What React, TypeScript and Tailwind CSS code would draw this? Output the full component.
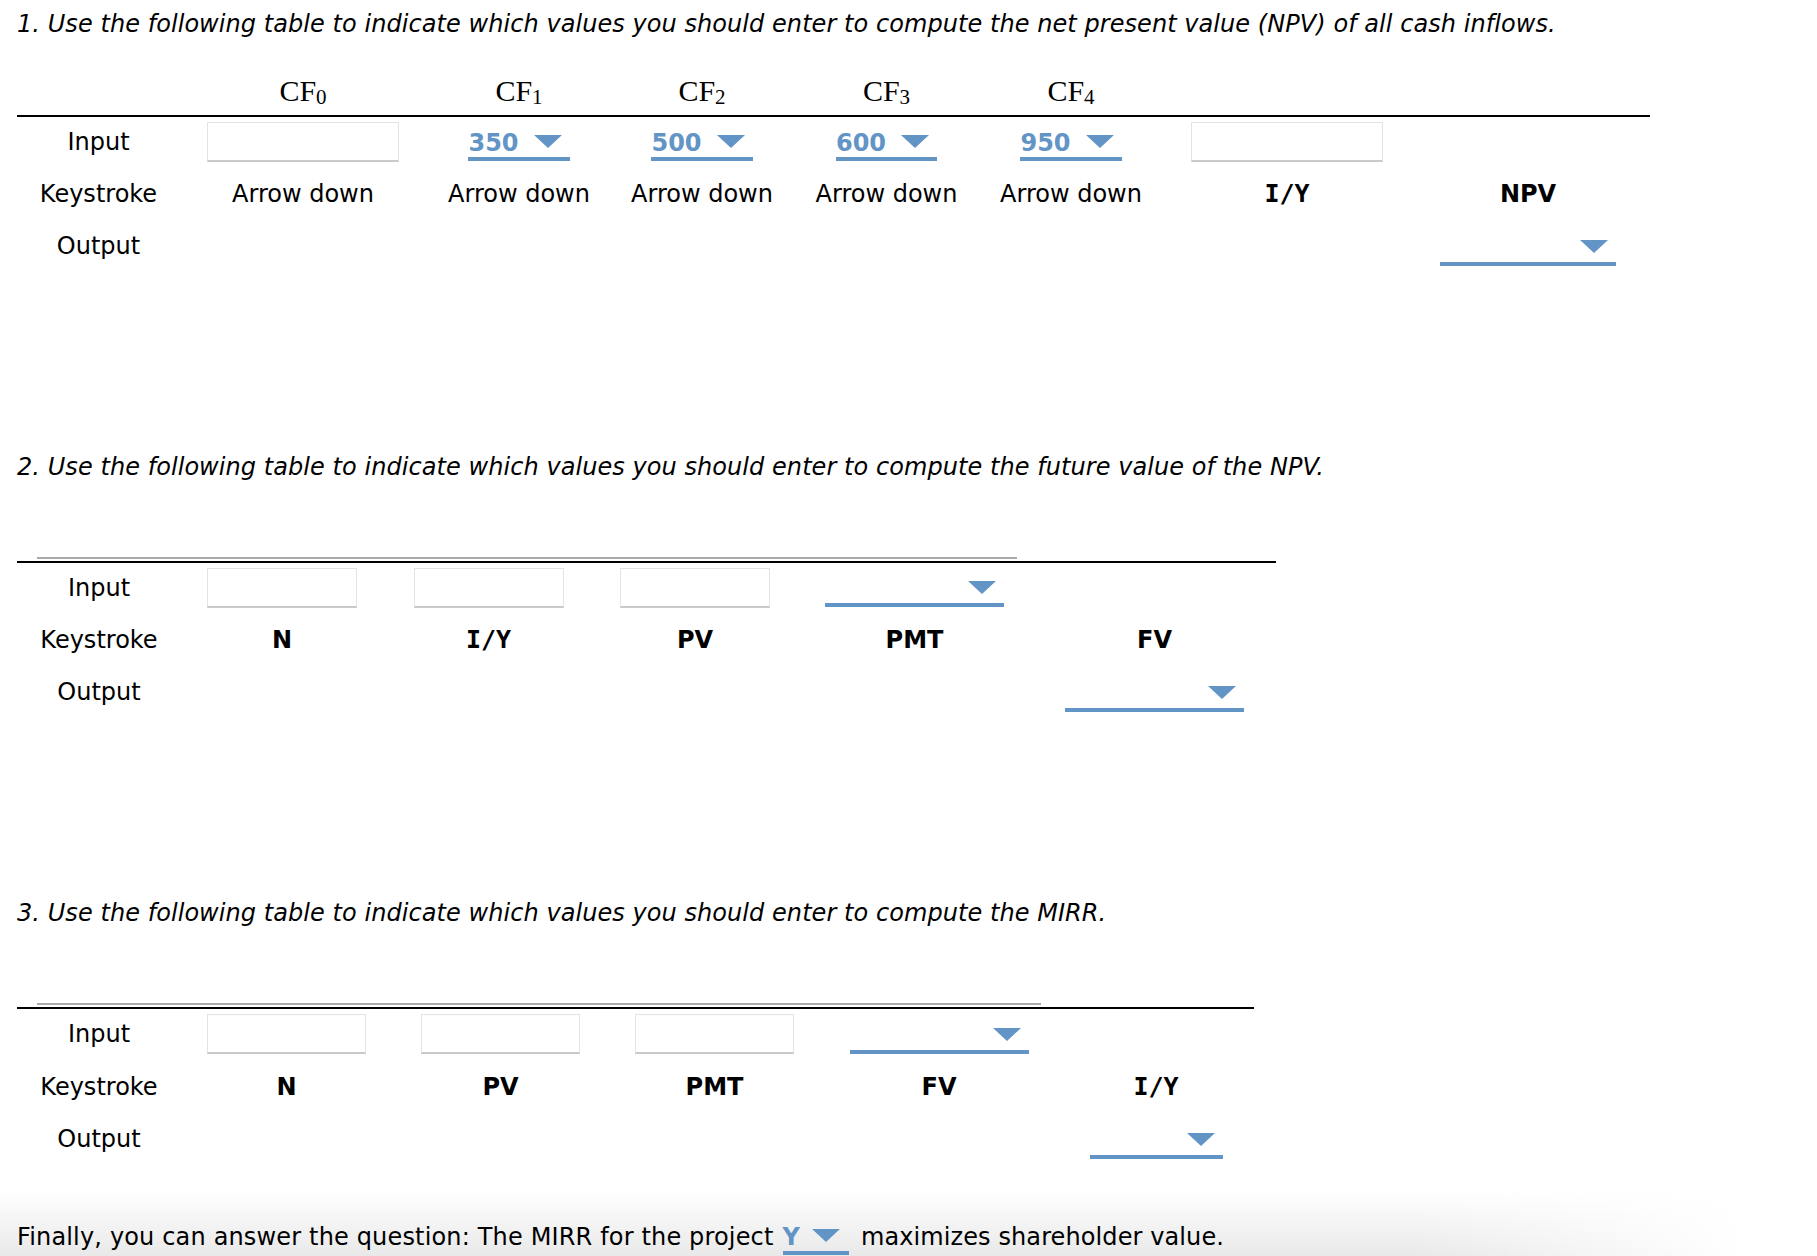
import { clsx, type ClassValue } from "clsx";
import { twMerge } from "tailwind-merge";

function cn(...inputs: ClassValue[]) {
  return twMerge(clsx(inputs));
}

const T1 = "grid grid-cols-[163px_246px_186px_180px_189px_180px_252px_230px_7px] justify-items-center items-center";
const T2 = "grid grid-cols-[164px_202px_211px_202px_237px_243px] justify-items-center items-center";
const T3 = "grid grid-cols-[164px_211px_217px_211px_238px_196px] justify-items-center items-center";

function Caret() {
  return (
    <svg width="28" height="13" viewBox="0 0 28 13" className="shrink-0 mb-[3px]">
      <polygon points="0,0 28,0 14,13" fill="#6394c6" />
    </svg>
  );
}

function Pick({ value, className }: { value?: string; className?: string }) {
  return (
    <div
      className={cn(
        "flex h-[39px] items-center border-b-4 border-[#6394c6] pt-[7px] pr-[8px] leading-[28px]",
        value ? "gap-[15px]" : "justify-end",
        className
      )}
    >
      {value && <span className="font-bold text-[#6394c6]">{value}</span>}
      <Caret />
    </div>
  );
}

function Box({ className }: { className?: string }) {
  return <div className={cn("h-[40px] border border-[#e3e3e3] border-b-2 border-b-[#c9c9c9] bg-white", className)} />;
}

function CF({ n }: { n: number }) {
  return (
    <span className="font-['Liberation_Serif',serif] text-[30px] leading-[34px]">
      CF<span className="relative top-[3px] text-[21px]">{n}</span>
    </span>
  );
}

function Label({ children }: { children: React.ReactNode }) {
  return <div className="leading-[28px]">{children}</div>;
}

function Key({ children }: { children: React.ReactNode }) {
  return <div className="leading-[28px] font-bold">{children}</div>;
}

// the calculator's I/Y key label has a serifed I in the original
function IY() {
  return <div className="leading-[28px] font-bold font-['DejaVu_Sans_Mono',monospace] text-[25px]">I/Y</div>;
}

function Heading({ children, className }: { children: React.ReactNode; className?: string }) {
  return <p className={cn("italic leading-[28px] tracking-[0.06px]", className)}>{children}</p>;
}

export default function App() {
  return (
    <div className="relative h-[1256px] w-full overflow-hidden bg-white text-black font-['DejaVu_Sans',Verdana,sans-serif] text-[24px]">
      <div className="pointer-events-none absolute bottom-0 left-0 h-[66px] w-full bg-[linear-gradient(to_bottom,rgba(233,233,233,0),#e9e9e9)] [mask-image:linear-gradient(to_right,#000_78%,transparent_96%)]" />

      <div className="relative pl-[17px]">
        {/* part 1 */}
        <Heading className="pt-[10px]">
          1. Use the following table to indicate which values you should enter to compute the net present value (NPV) of all cash inflows.
        </Heading>
        <div className="w-[1633px]">
          <div className={cn(T1, "h-[79px] items-end pb-[4px] border-b-2 border-black")}>
            <div />
            <CF n={0} />
            <CF n={1} />
            <CF n={2} />
            <CF n={3} />
            <CF n={4} />
            <div />
            <div />
          </div>
          <div className={cn(T1, "h-[49px]")}>
            <Label>Input</Label>
            <Box className="w-[192px]" />
            <Pick value="350" />
            <Pick value="500" />
            <Pick value="600" />
            <Pick value="950" />
            <Box className="w-[192px]" />
            <div />
          </div>
          <div className={cn(T1, "h-[55px]")}>
            <Label>Keystroke</Label>
            <Label>Arrow down</Label>
            <Label>Arrow down</Label>
            <Label>Arrow down</Label>
            <Label>Arrow down</Label>
            <Label>Arrow down</Label>
            <IY />
            <Key>NPV</Key>
          </div>
          <div className={cn(T1, "h-[50px]")}>
            <Label>Output</Label>
            <div />
            <div />
            <div />
            <div />
            <div />
            <div />
            <Pick className="w-[176px]" />
          </div>
        </div>

        {/* part 2 */}
        <Heading className="mt-[182px]">
          2. Use the following table to indicate which values you should enter to compute the future value of the NPV.
        </Heading>
        <div className="mt-[76px] ml-[20px] h-[2px] w-[980px] bg-[#aaaaaa]" />
        <div className="mt-[2px] h-[2px] w-[1259px] bg-black" />
        <div className="w-[1259px]">
          <div className={cn(T2, "h-[49px]")}>
            <Label>Input</Label>
            <Box className="w-[150px]" />
            <Box className="w-[150px]" />
            <Box className="w-[150px]" />
            <Pick className="w-[179px]" />
            <div />
          </div>
          <div className={cn(T2, "h-[55px]")}>
            <Label>Keystroke</Label>
            <Key>N</Key>
            <IY />
            <Key>PV</Key>
            <Key>PMT</Key>
            <Key>FV</Key>
          </div>
          <div className={cn(T2, "h-[50px]")}>
            <Label>Output</Label>
            <div />
            <div />
            <div />
            <div />
            <Pick className="w-[179px]" />
          </div>
        </div>

        {/* part 3 */}
        <Heading className="mt-[182px]">
          3. Use the following table to indicate which values you should enter to compute the MIRR.
        </Heading>
        <div className="mt-[76px] ml-[20px] h-[2px] w-[1004px] bg-[#aaaaaa]" />
        <div className="mt-[2px] h-[2px] w-[1237px] bg-black" />
        <div className="w-[1237px]">
          <div className={cn(T3, "h-[50px]")}>
            <Label>Input</Label>
            <Box className="w-[159px]" />
            <Box className="w-[159px]" />
            <Box className="w-[159px]" />
            <Pick className="w-[179px]" />
            <div />
          </div>
          <div className={cn(T3, "h-[55px]")}>
            <Label>Keystroke</Label>
            <Key>N</Key>
            <Key>PV</Key>
            <Key>PMT</Key>
            <Key>FV</Key>
            <IY />
          </div>
          <div className={cn(T3, "h-[50px]")}>
            <Label>Output</Label>
            <div />
            <div />
            <div />
            <div />
            <Pick className="w-[133px]" />
          </div>
        </div>

        {/* closing question */}
        <div className="mt-[52px] flex items-start">
          <span className="mt-[7px] leading-[28px] tracking-[0.16px]">Finally, you can answer the question: The MIRR for the project</span>
          <Pick value="Y" className="ml-[9px] gap-[12px] pr-[9px]" />
          <span className="ml-[12px] mt-[7px] leading-[28px] tracking-[0.1px]">maximizes shareholder value.</span>
        </div>
      </div>
    </div>
  );
}
